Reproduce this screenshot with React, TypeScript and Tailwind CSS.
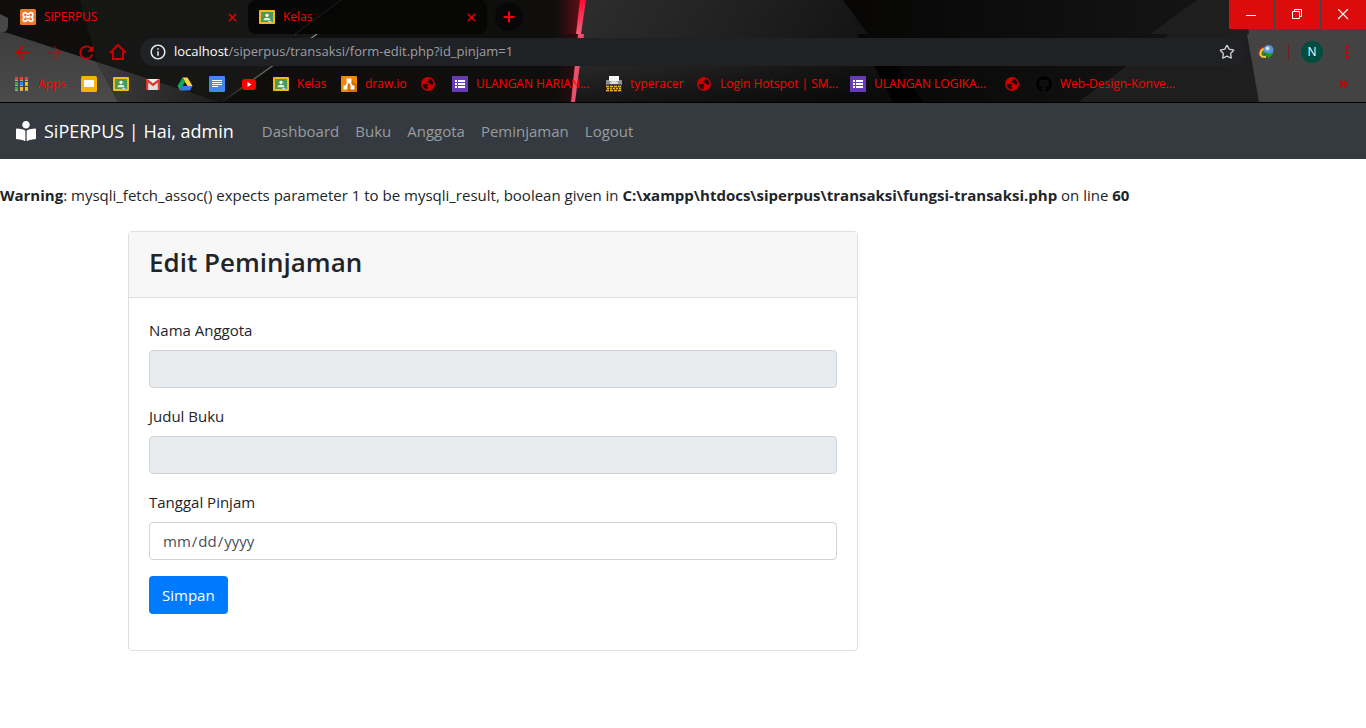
import React from "react";
import { Plus, X, Star } from "lucide-react";
import { FaBookReader, FaGithub } from "react-icons/fa";
import { MdArrowBack, MdArrowForward, MdInfoOutline, MdRefresh } from "react-icons/md";

function ThemeArt() {
  return (
    <svg className="absolute inset-0 h-full w-full" viewBox="0 0 1366 102" preserveAspectRatio="none" aria-hidden="true">
      <defs>
        <linearGradient id="panel" x1="0" x2="1" y1="0" y2="0.2">
          <stop offset="0" stopColor="#2e2e2e" />
          <stop offset="0.5" stopColor="#212121" />
          <stop offset="1" stopColor="#121212" />
        </linearGradient>
        <linearGradient id="shade" x1="0" x2="0" y1="0" y2="1">
          <stop offset="0.6" stopColor="#000" stopOpacity="0" />
          <stop offset="1" stopColor="#000" stopOpacity="0.45" />
        </linearGradient>
        <linearGradient id="glow" x1="0" x2="1">
          <stop offset="0" stopColor="#a00018" stopOpacity="0" />
          <stop offset="1" stopColor="#a01018" stopOpacity="0.6" />
        </linearGradient>
        <linearGradient id="beam" x1="0" x2="0" y1="0" y2="1">
          <stop offset="0" stopColor="#ff0a35" />
          <stop offset="1" stopColor="#f0607c" />
        </linearGradient>
        <linearGradient id="right" x1="0" x2="1">
          <stop offset="0" stopColor="#070605" />
          <stop offset="1" stopColor="#141414" />
        </linearGradient>
        <linearGradient id="wedge" x1="0" x2="1">
          <stop offset="0" stopColor="#3c3c3c" />
          <stop offset="1" stopColor="#1e1e1e" />
        </linearGradient>
        <linearGradient id="slab" x1="0" x2="0" y1="0" y2="1">
          <stop offset="0" stopColor="#3d3d3d" />
          <stop offset="1" stopColor="#4b4b4b" />
        </linearGradient>
        <linearGradient id="line" x1="0" x2="0" y1="0" y2="1">
          <stop offset="0" stopColor="#8a8a8a" />
          <stop offset="0.7" stopColor="#555555" />
          <stop offset="1" stopColor="#1a1a1a" />
        </linearGradient>
      </defs>
      <rect width="1366" height="102" fill="#0f0e0d" />
      <path d="M80 0H341L295 34H317L222 102L97 62Z" fill="#161615" />
      <path d="M0 14L8 18V26Q8 33 0 33Z" fill="#484848" />
      <path d="M0 32L8 33L97 62L118 102H0Z" fill="url(#slab)" />
      <path d="M97 62L220 102H118Z" fill="url(#wedge)" />
      <path d="M341 0L295 34" stroke="#777777" strokeWidth="1.3" />
      <path d="M317 34L222 102" stroke="url(#line)" strokeWidth="1.3" />
      <path d="M583 0H843L868 34H857L893 102H571Z" fill="url(#panel)" />
      <path d="M583 0H843L868 34H857L893 102H571Z" fill="url(#shade)" />
      <path d="M843 0H1197L1150 34H1170L1078 102H893L857 34H868Z" fill="url(#right)" />
      <path d="M875 66L897 66L923 102H893Z" fill="#020202" />
      <path d="M1197 0H1366V102H1078L1170 34H1150Z" fill="#1e1e1e" />
      <path d="M1245 0H1366V102H1259L1247 34H1249Z" fill="#434343" />
      <path d="M556 0H582L577 34H556Z" fill="url(#glow)" />
      <path d="M556 34H578L571 102H556Z" fill="url(#glow)" opacity="0.35" />
      <path d="M580 0H586L581 34H576Z" fill="url(#beam)" />
      <path d="M578 34H584L575 102H571Z" fill="#e8506c" />
    </svg>
  );
}

function XamppIcon() {
  return (
    <svg className="h-4 w-4 shrink-0" viewBox="0 0 16 16" aria-hidden="true">
      <rect width="16" height="16" rx="1.500" fill="#f37623" />
      <path d="M5 3.600C2.600 3.600 2.600 7 4.600 8C2.600 9 2.600 12.400 5 12.400C6.500 12.400 6.500 11 8 11C9.500 11 9.500 12.400 11 12.400C13.400 12.400 13.400 9 11.400 8C13.400 7 13.400 3.600 11 3.600C9.500 3.600 9.500 5 8 5C6.500 5 6.500 3.600 5 3.600Z" fill="none" stroke="#fff" strokeWidth="1.700" />
      <path d="M6 6.800L10 9.200M10 6.800L6 9.200" stroke="#fff" strokeWidth="1.400" />
    </svg>
  );
}

function ClassroomIcon() {
  return (
    <svg className="h-4 w-4 shrink-0" viewBox="0 0 16 16" aria-hidden="true">
      <rect y="1" width="16" height="14" rx="1" fill="#f5ba15" />
      <rect x="2" y="3" width="12" height="10" fill="#4a9b56" />
      <circle cx="8" cy="6.300" r="1.600" fill="#fff" />
      <path d="M4.500 11.200C4.500 8 11.500 8 11.500 11.200Z" fill="#e6f2e7" />
      <rect x="9" y="12.200" width="3.500" height="1" fill="#ddd" />
    </svg>
  );
}

function AppsIcon() {
  const colors = ["#ea4335", "#ea4335", "#ea4335", "#34a853", "#1a8cff", "#fbbc05", "#34a853", "#fbbc05", "#fbbc05"];
  return (
    <svg className="h-4 w-4 shrink-0" viewBox="0 0 16 16" aria-hidden="true">
      {colors.map((c, i) => (
        <g key={i}>
          <rect x={1 + (i % 3) * 5} y={1 + Math.floor(i / 3) * 5} width="3" height="3" fill={c} />
          <rect x={1 + (i % 3) * 5} y={4 + Math.floor(i / 3) * 5} width="3" height="1" fill="#a8a8a8" />
        </g>
      ))}
    </svg>
  );
}

function SlidesIcon() {
  return (
    <svg className="h-4 w-4 shrink-0" viewBox="0 0 16 16" aria-hidden="true">
      <rect width="16" height="16" rx="1.500" fill="#f4b400" />
      <rect x="3" y="4" width="10" height="7" fill="#fff" />
    </svg>
  );
}

function GmailIcon() {
  return (
    <svg className="h-4 w-4 shrink-0" viewBox="0 0 16 16" aria-hidden="true">
      <rect x="1" y="3" width="14" height="11" rx="1" fill="#f1f1f1" />
      <path d="M3 14V5L8 9L13 5V14Z" fill="#dedede" />
      <path d="M1 4V14H3.200V6.500L8 10.200L12.800 6.500V14H15V4C15 3.200 14 2.700 13.300 3.200L8 7.200L2.700 3.200C2 2.700 1 3.200 1 4Z" fill="#d93a2f" />
    </svg>
  );
}

function DriveIcon() {
  return (
    <svg className="h-4 w-4 shrink-0" viewBox="0 0 16 16" aria-hidden="true">
      <path d="M5.500 1.500H10.500L15.500 10H10.500Z" fill="#ffcf48" />
      <path d="M5.500 1.500L0.500 10L3 14.500L8 6Z" fill="#11a861" />
      <path d="M5.500 10H15.500L13 14.500H3Z" fill="#3b78e7" />
    </svg>
  );
}

function DocsIcon() {
  return (
    <svg className="h-4 w-4 shrink-0" viewBox="0 0 16 16" aria-hidden="true">
      <rect width="16" height="16" rx="1" fill="#4285f4" />
      <path d="M3 4.500H13M3 6.500H13M3 8.500H13M3 10.500H9" stroke="#fff" />
    </svg>
  );
}

function YoutubeIcon() {
  return (
    <svg className="h-4 w-4 shrink-0" viewBox="0 0 16 16" aria-hidden="true">
      <rect x="1" y="3" width="14" height="11" rx="3" fill="#f00" />
      <path d="M6.500 6V11L10.500 8.500Z" fill="#fff" />
    </svg>
  );
}

function DrawIcon() {
  return (
    <svg className="h-4 w-4 shrink-0" viewBox="0 0 16 16" aria-hidden="true">
      <rect width="16" height="16" rx="1" fill="#f08705" />
      <path d="M10 3L16 9V16H8L4 12Z" fill="#d96c00" />
      <path d="M8 5L4.500 11M8 5L11.500 11" stroke="#fff" strokeWidth="1.500" />
      <path d="M5.500 2.500H10.500V6.500H5.500ZM2.500 9.500H6.500V13.500H2.500ZM9.500 9.500H13.500V13.500H9.500Z" fill="#fff" />
    </svg>
  );
}

function GlobeIcon() {
  return (
    <svg className="h-4 w-4 shrink-0" viewBox="0 0 16 16" aria-hidden="true">
      <circle cx="8" cy="8" r="7" fill="#c80000" />
      <path d="M2.600 8H6.500C7.800 8 8.200 9 8 10H6.800V11.200H8V13.300C4.800 13.300 2.600 11 2.600 8ZM10 3C8.500 3.200 8.300 4.200 9 5C7 4.800 6 6 7.200 6.800H9C10 6.800 10 8.600 11.500 8.600H13.200C13.700 6 12.300 3.800 10 3Z" fill="#1a0606" />
    </svg>
  );
}

function FormsIcon() {
  return (
    <svg className="h-4 w-4 shrink-0" viewBox="0 0 16 16" aria-hidden="true">
      <rect width="16" height="16" rx="0.500" fill="#673ab7" />
      <path d="M3 4H5V6H3ZM6 4H13V6H6ZM3 7H5V9H3ZM6 7H13V9H6ZM3 10H5V12H3ZM6 10H13V12H6Z" fill="#fff" />
    </svg>
  );
}

function TyperacerIcon() {
  return (
    <svg className="h-4 w-4 shrink-0" viewBox="0 0 16 16" aria-hidden="true">
      <path d="M3 0H13V5H3Z" fill="#f4f4f4" />
      <path d="M0 4H3V5H13V4H16V9H0Z" fill="#8d9298" />
      <path d="M4 6Q8 4 12 6V8H4Z" fill="#d8dce0" />
      <path d="M1 8H15V9H1Z" fill="#4a4a4a" />
      <rect y="9" width="16" height="7" fill="#3a2a10" />
      <path d="M0 10.500H16M0 14.500H16" stroke="#f0b030" strokeWidth="1.600" strokeDasharray="3 1" />
      <path d="M1 12.500H15" stroke="#f0b030" strokeWidth="1.600" strokeDasharray="2 1" />
    </svg>
  );
}

function IdmIcon() {
  return (
    <svg className="h-4 w-4 shrink-0" viewBox="0 0 16 16" aria-hidden="true">
      <path d="M7 3.500C2 3.500 0 9 2 12" fill="none" stroke="#c8362c" strokeWidth="1.500" />
      <path d="M7 5C3 5 1 10 4 12.500L8 13" fill="none" stroke="#f0d020" strokeWidth="2" />
      <path d="M7 7C5 7 4 9 6 11" fill="none" stroke="#3a8a50" strokeWidth="1.500" />
      <circle cx="10.500" cy="6" r="5" fill="#5b93d8" />
      <circle cx="9.500" cy="4.500" r="2" fill="#cfe2f5" />
      <path d="M6 8L11 9.500L16 9L13 12L10 15L9.500 12.500L5 11.500L8 10.500Z" fill="#1f9a1a" />
    </svg>
  );
}

function HomeIcon() {
  return (
    <svg width="18" height="18" viewBox="0 0 18 18" fill="none" stroke="currentColor" strokeWidth="2" aria-hidden="true">
      <path d="M1 10L9 2L17 10M4 8.500V16H14V8.500" />
    </svg>
  );
}

type Bookmark = { label: string; icon: React.ReactNode; text?: boolean; width: string };

const bookmarks: Bookmark[] = [
  { label: "Apps", icon: <AppsIcon />, text: true, width: "w-[67px]" },
  { label: "Slides", icon: <SlidesIcon />, width: "w-8" },
  { label: "Classroom", icon: <ClassroomIcon />, width: "w-8" },
  { label: "Gmail", icon: <GmailIcon />, width: "w-8" },
  { label: "Drive", icon: <DriveIcon />, width: "w-8" },
  { label: "Docs", icon: <DocsIcon />, width: "w-8" },
  { label: "YouTube", icon: <YoutubeIcon />, width: "w-8" },
  { label: "Kelas", icon: <ClassroomIcon />, text: true, width: "w-[68px]" },
  { label: "draw.io", icon: <DrawIcon />, text: true, width: "w-[79px]" },
  { label: "Situs", icon: <GlobeIcon />, width: "w-8" },
  { label: "ULANGAN HARIAN...", icon: <FormsIcon />, text: true, width: "w-[154px]" },
  { label: "typeracer", icon: <TyperacerIcon />, text: true, width: "w-[90px]" },
  { label: "Login Hotspot | SM...", icon: <GlobeIcon />, text: true, width: "w-[154px]" },
  { label: "ULANGAN LOGIKA...", icon: <FormsIcon />, text: true, width: "w-[154px]" },
  { label: "Situs", icon: <GlobeIcon />, width: "w-8" },
  { label: "Web-Design-Konve...", icon: <FaGithub className="h-4 w-4 shrink-0 text-black" />, text: true, width: "w-[154px]" },
];

function TabStrip() {
  return (
    <div className="relative flex h-[34px] pl-2">
      <div className="flex w-60 items-center gap-2 pl-3 pr-2">
        <XamppIcon />
        <span className="flex-1">SiPERPUS</span>
        <button aria-label="Close SiPERPUS" className="flex h-4 w-4 items-center justify-center text-[#e00000]">
          <X size={13} strokeWidth={3} />
        </button>
      </div>
      <div className="flex w-[239px] items-center gap-2 rounded-lg bg-[#050505]/85 pl-[11px] pr-2">
        <ClassroomIcon />
        <span className="flex-1">Kelas</span>
        <button aria-label="Close Kelas" className="flex h-4 w-4 items-center justify-center text-[#e00000]">
          <X size={13} strokeWidth={3} />
        </button>
      </div>
      <button aria-label="New tab" className="ml-2 mt-[3px] flex h-7 w-7 items-center justify-center rounded-full bg-[#070707] text-[#ff0000]">
        <Plus size={16} strokeWidth={3} />
      </button>
      <div className="ml-auto flex h-[29px] gap-px text-white">
        <button aria-label="Minimize" className="flex w-[45px] items-center justify-center bg-[#dc0c0c]">
          <svg width="11" height="10" viewBox="0 0 11 10"><path d="M0 5.500H10" stroke="currentColor" /></svg>
        </button>
        <button aria-label="Restore" className="flex w-[45px] items-center justify-center bg-[#dc0c0c]">
          <svg width="11" height="11" viewBox="0 0 11 11" fill="none" stroke="currentColor"><path d="M0.500 2.500H7.500V9.500H0.500ZM2.500 2.500V0.500H9.500V7.500H7.500" /></svg>
        </button>
        <button aria-label="Close" className="flex w-[45px] items-center justify-center bg-[#dc0c0c]">
          <svg width="11" height="11" viewBox="0 0 11 11"><path d="M0 0L10 10M10 0L0 10" stroke="currentColor" strokeWidth="1.200" /></svg>
        </button>
      </div>
    </div>
  );
}

function Toolbar() {
  return (
    <div className="relative flex h-9 items-center pl-3 pr-[11px] text-[#cc0000]">
      <button aria-label="Back" className="flex w-8 items-center"><MdArrowBack size={21} /></button>
      <button aria-label="Forward" className="flex w-8 items-center opacity-50"><MdArrowForward size={21} /></button>
      <button aria-label="Reload" className="flex w-[33px] items-center"><MdRefresh size={21} /></button>
      <button aria-label="Home" className="flex w-[31px] items-center"><HomeIcon /></button>
      <div className="flex h-7 flex-1 items-center rounded-full bg-[#202124] px-[9px]">
        <MdInfoOutline size={18} className="shrink-0 text-[#e8eaed]" />
        <span className="ml-[7px] flex-1 text-[13px] text-[#9aa0a6]"><span className="text-white">localhost</span>/siperpus/transaksi/form-edit.php?id_pinjam=1</span>
        <button aria-label="Bookmark this page" className="text-[#d0d0d0]"><Star size={16} /></button>
      </div>
      <div className="ml-[14px] flex items-center">
        <button aria-label="Downloads extension"><IdmIcon /></button>
        <span className="ml-3.5 h-4 w-px bg-[#6e2020]" />
        <button aria-label="Profile" className="ml-3 flex h-[22px] w-[22px] items-center justify-center rounded-full bg-[#004d40] text-xs text-white">N</button>
        <button aria-label="Menu" className="ml-4 flex w-4 justify-center">
          <svg width="4" height="14" viewBox="0 0 4 14" fill="currentColor"><circle cx="2" cy="2" r="1.700" /><circle cx="2" cy="7" r="1.700" /><circle cx="2" cy="12" r="1.700" /></svg>
        </button>
      </div>
    </div>
  );
}

function BookmarkBar() {
  return (
    <nav aria-label="Bookmarks" className="relative flex h-8 items-center pb-1 pl-[14px] pr-[18px]">
      {bookmarks.map((b, i) => (
        <a key={i} href="#" aria-label={b.label} className={`flex shrink-0 items-center gap-2 whitespace-nowrap ${b.width}`}>
          {b.icon}
          {b.text && <span>{b.label}</span>}
        </a>
      ))}
      <button aria-label="More bookmarks" className="ml-auto text-[#cc0000]">
        <svg width="9" height="8" viewBox="0 0 9 8" fill="none" stroke="currentColor" strokeWidth="1.800"><path d="M1 1L4 4L1 7M5 1L8 4L5 7" /></svg>
      </button>
    </nav>
  );
}

const links = ["Dashboard", "Buku", "Anggota", "Peminjaman", "Logout"];

export default function App() {
  return (
    <div className="min-h-screen bg-white font-['Segoe_UI','Open_Sans',sans-serif] text-[15px] leading-6 text-[#212529]">
      <header className="relative border-b border-black text-xs text-[#ff0000]">
        <ThemeArt />
        <TabStrip />
        <Toolbar />
        <BookmarkBar />
      </header>
      <nav aria-label="Main" className="flex h-14 items-center bg-[#343a40] px-4">
        <a href="#" className="mr-5 flex items-center gap-2 text-lg text-white">
          <FaBookReader size={20} />
          SiPERPUS | Hai, admin
        </a>
        <ul className="flex text-[#999c9f]">
          {links.map((l) => (
            <li key={l}><a href="#" className="block px-2 py-2">{l}</a></li>
          ))}
        </ul>
      </nav>
      <main>
        <p className="py-6">
          <b>Warning</b>: mysqli_fetch_assoc() expects parameter 1 to be mysqli_result, boolean given in <b>C:\xampp\htdocs\siperpus\transaksi\fungsi-transaksi.php</b> on line <b>60</b>
        </p>
        <div className="mx-auto max-w-[1140px] px-[15px]">
          <section className="max-w-[730px] rounded border border-[#dfdfdf] bg-white">
            <div className="border-b border-[#dfdfdf] bg-[#f7f7f7] px-5 pb-4 pt-3">
              <h3 className="text-[26px] font-semibold leading-[37px]">Edit Peminjaman</h3>
            </div>
            <form className="px-5 pb-9 pt-5" onSubmit={(e) => e.preventDefault()}>
              <div className="mb-4">
                <label htmlFor="nama" className="mb-2 block">Nama Anggota</label>
                <input id="nama" readOnly className="block h-[38px] w-full rounded border border-[#ced4da] bg-[#e9ecef] px-3" />
              </div>
              <div className="mb-4">
                <label htmlFor="judul" className="mb-2 block">Judul Buku</label>
                <input id="judul" readOnly className="block h-[38px] w-full rounded border border-[#ced4da] bg-[#e9ecef] px-3" />
              </div>
              <div className="mb-4">
                <label htmlFor="tanggal" className="mb-2 block">Tanggal Pinjam</label>
                <input id="tanggal" type="date" className="block h-[38px] w-full rounded border border-[#ced4da] px-3 text-[#495057] [&::-webkit-calendar-picker-indicator]:hidden" />
              </div>
              <button type="submit" className="block h-[38px] rounded bg-[#007bff] px-[13px] text-white">Simpan</button>
            </form>
          </section>
        </div>
      </main>
    </div>
  );
}
